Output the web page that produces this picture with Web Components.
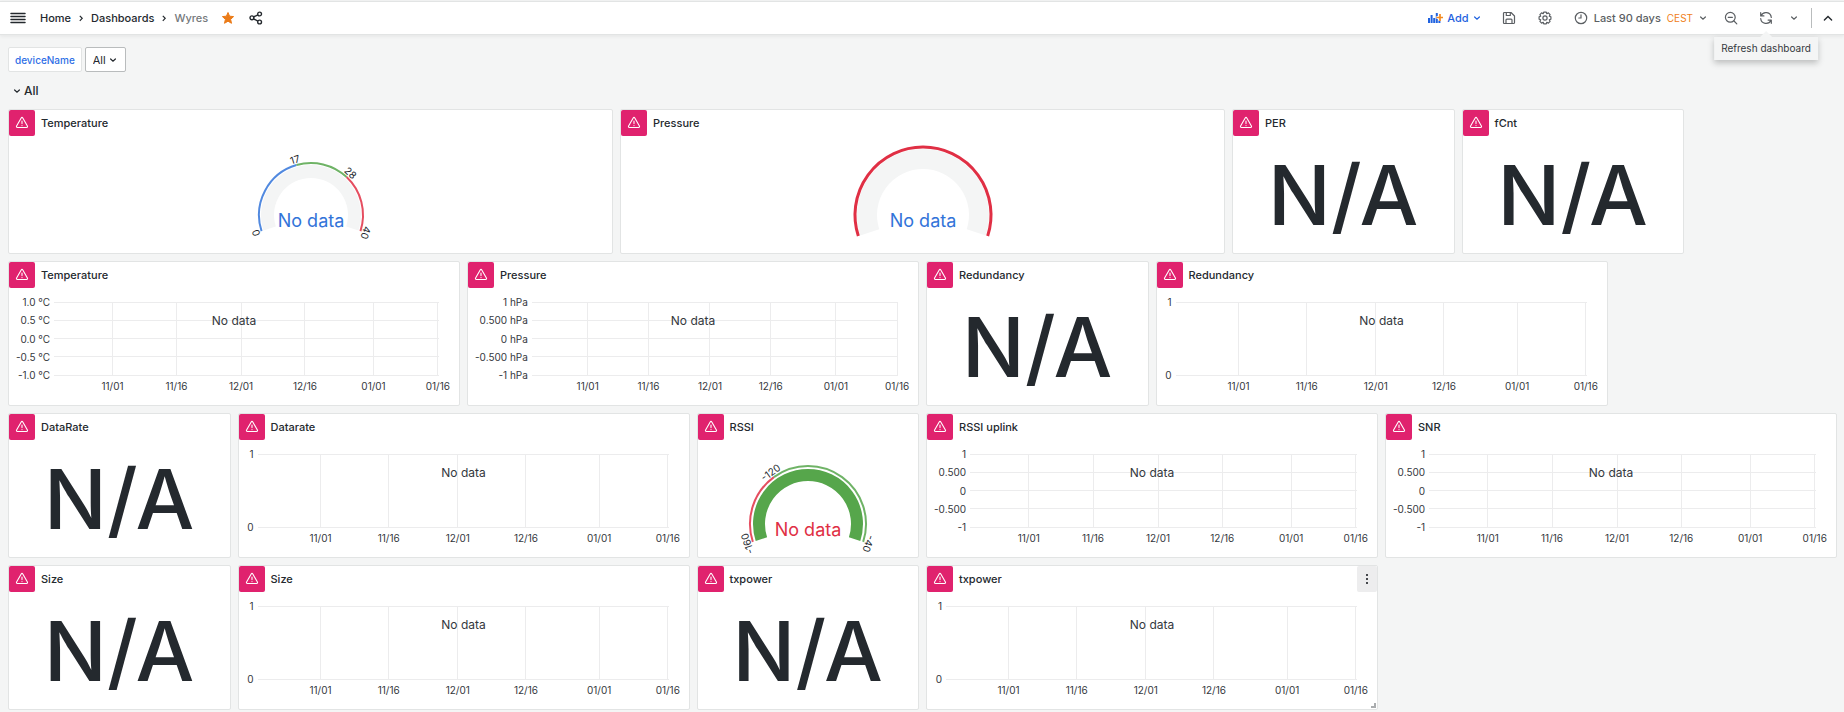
<!DOCTYPE html>
<html lang="en">
<head>
<meta charset="utf-8">
<title>Wyres - Dashboards</title>
<style>
  :root {
    --text: #24292e;
    --muted: #5b5f63;
    --canvas: #f4f5f5;
    --line: #e2e4e4;
    --blue: #1f62e0;
    --orange: #eb7b18;
    --error: #e0226e;
  }
  body { margin: 0; background: var(--canvas); color: var(--text); font: 11px/16px Inter, "Liberation Sans", sans-serif; }
</style>
</head>
<body>
<wyres-app></wyres-app>

<script>
const ICONS = {
  bars: [16, 12, '<g stroke="currentColor" stroke-width="1.5" stroke-linecap="round"><path d="M1 1.5h14M1 4.5h14M1 7.5h14M1 10.5h14"/></g>'],
  star: [14, 14, '<path fill="#eb7b18" stroke="#eb7b18" stroke-width="1" stroke-linejoin="round" d="M7 1.5l1.6 3.7 4 .4-3 2.7.9 4L7 10.2l-3.5 2.1.9-4-3-2.7 4-.4z"/>'],
  share: [14, 14, '<g fill="none" stroke="currentColor" stroke-width="1.4"><circle cx="10.6" cy="3" r="1.9"/><circle cx="2.9" cy="6.8" r="1.9"/><circle cx="10.6" cy="11" r="1.9"/><path d="M4.6 6l4.3-2.1M4.6 7.8l4.3 2.3"/></g>'],
  right: [6, 8, '<path fill="none" stroke="currentColor" stroke-width="1.2" d="M1.8 1.8L4.2 4.3 1.8 6.8"/>'],
  down: [8, 8, '<path fill="none" stroke="currentColor" stroke-width="1.2" stroke-linecap="round" d="M1.6 3L4 5.2 6.400 3"/>'],
  up: [10, 8, '<path fill="none" stroke="currentColor" stroke-width="1.4" stroke-linecap="round" d="M1.4 6L5 2.4 8.600 6"/>'],
  add: [15, 12, '<path fill="#1f62e0" d="M0 6h2v5H0zM2.600 3h2v8h-2zM5.200 6h2v5h-2zM7.800 1h2v10h-2zM10.400 8h2v3h-2z"/><path stroke="#fff" stroke-width="3.200" d="M12 2v7M8.500 5.500h7"/><path stroke="#f58a1f" stroke-width="1.700" d="M12 2v7M8.500 5.500H15"/>'],
  save: [14, 14, '<g fill="none" stroke="currentColor" stroke-width="1.200" stroke-linejoin="round"><path d="M1.500 2.600q0-1.100 1.100-1.100H9l3.500 3.500v6.400q0 1.100-1.100 1.100H2.600q-1.100 0-1.100-1.100z"/><path d="M4.300 1.500v3h4v-3M4 12.500V9q0-.9.900-.9h4.200q.9 0 .9.900v3.500"/></g>'],
  cog: [14, 14, '<g fill="none" stroke="currentColor" stroke-width="1.200" stroke-linejoin="round"><circle cx="7" cy="7" r="2.100"/><path d="M5.700 1.100h2.600l.5 1.600 1.600-.8 1.700 1.700-.8 1.600 1.600.5v2.600l-1.600.5.8 1.600-1.700 1.700-1.600-.8-.5 1.600H5.700l-.5-1.600-1.600.8-1.700-1.700.8-1.600-1.600-.5V5.700l1.600-.5-.8-1.600 1.700-1.700 1.600.8z"/></g>'],
  clock: [14, 14, '<g fill="none" stroke="currentColor" stroke-width="1.200" stroke-linecap="round"><circle cx="7" cy="7" r="5.700"/><path d="M7 3.800V7H4.800"/></g>'],
  zoomout: [14, 14, '<g fill="none" stroke="currentColor" stroke-width="1.200" stroke-linecap="round"><circle cx="6.300" cy="6.300" r="4.900"/><path d="M4.200 6.300h4.200M10 10l2.800 2.800"/></g>'],
  refresh: [14, 14, '<g fill="none" stroke="currentColor" stroke-width="1.200" stroke-linecap="round" stroke-linejoin="round"><path d="M2 4.800A5.400 5.400 0 0 1 12.300 6.500M1.700 1.700v3.200h3.200M12 9.200A5.400 5.400 0 0 1 1.700 7.500M12.300 12.300V9.100H9.100"/></g>'],
  warning: [14, 14, '<g fill="none" stroke="currentColor" stroke-width="1.100" stroke-linecap="round" stroke-linejoin="round"><path d="M6.200 2q.8-1.200 1.600 0l4.600 8q.6 1.400-.9 1.500h-9Q1 11.400 1.600 10z"/><path d="M7 5v2.600M7 9.500v.1"/></g>'],
  dots: [4, 12, '<g fill="currentColor"><path d="M1 1h2v2H1zM1 5h2v2H1zM1 9h2v2H1z"/></g>'],
  grip: [5, 5, '<path fill="none" stroke="#a9acae" stroke-width="2" d="M4 0v4H0"/>']
};

class Base extends HTMLElement {
  mount(html) {
    if (!this.shadowRoot) this.attachShadow({ mode: 'open' });
    this.shadowRoot.innerHTML = html;
  }
  connectedCallback() { this.mount(this.render()); }
}

customElements.define('wyres-icon', class extends Base {
  render() {
    const [w, h, body] = ICONS[this.getAttribute('name')];
    return `<style>:host{display:inline-flex;flex:none}svg{display:block}</style>
      <svg width="${w}" height="${h}" viewBox="0 0 ${w} ${h}" aria-hidden="true">${body}</svg>`;
  }
});

const CONTROL = `
  button { display: flex; align-items: center; justify-content: center; height: 28px; margin: 0; padding: 0 8px;
    border: 0; background: none; color: inherit; font: inherit; font-weight: 500; cursor: pointer; }
`;

customElements.define('wyres-breadcrumbs', class extends Base {
  render() {
    return `<style>${CONTROL}
      :host { display: flex; align-items: center; font-weight: 500; padding-left: 2px; }
      nav { display: flex; align-items: center; gap: 6px; margin: 0 5px; }
      a { color: inherit; text-decoration: none; padding: 0 1px; }
      .here { color: #75797c; }
      .mark { padding: 0 7px; }
    </style>
    <button aria-label="Open menu"><wyres-icon name="bars"></wyres-icon></button>
    <nav aria-label="Breadcrumbs">
      <a href="#home">Home</a><wyres-icon name="right"></wyres-icon>
      <a href="#dashboards">Dashboards</a><wyres-icon name="right"></wyres-icon>
      <a class="here" href="#wyres">Wyres</a>
    </nav>
    <button class="mark" aria-label="Unmark as favorite"><wyres-icon name="star"></wyres-icon></button>
    <button class="mark" aria-label="Share dashboard"><wyres-icon name="share"></wyres-icon></button>`;
  }
});

customElements.define('wyres-tooltip', class extends Base {
  render() {
    return `<style>
      :host { display: block; position: absolute; top: 100%; left: 50%; transform: translateX(-50%); margin-top: 5px; z-index: 2;
        padding: 4px 7px; background: var(--canvas); box-shadow: 0 3px 6px rgba(24,26,27,.25); white-space: nowrap;
        font-size: 10px; line-height: 15px; color: #34383d; }
      :host::before { content: ""; position: absolute; left: 50%; bottom: 100%; margin-left: -6px; border: 6px solid transparent; border-top-width: 0; border-bottom-color: var(--canvas); }
    </style><slot></slot>`;
  }
});

customElements.define('wyres-toolbar', class extends Base {
  render() {
    return `<style>${CONTROL}
      :host { display: flex; align-items: center; color: var(--muted); }
      .icon { padding: 0 7px; margin-left: 8px; }
      .add { color: var(--blue); gap: 4px; padding: 0 6px; }
      .time { gap: 6px; padding: 0 7px; margin-left: 8px; }
      .zone { color: #f08020; font-size: 10px; font-weight: 400; }
      .zoom { padding: 0 7px; margin-left: 3px; }
      .group { display: flex; position: relative; margin-left: 6px; }
      .range { margin-right: 4px; padding: 0 9px; }
      .kiosk { border-left: 1px solid #b9bcbd; height: 20px; width: 33px; color: var(--text); }
    </style>
    <button class="add"><wyres-icon name="add"></wyres-icon>Add<wyres-icon name="down"></wyres-icon></button>
    <button class="icon" aria-label="Save dashboard"><wyres-icon name="save"></wyres-icon></button>
    <button class="icon" aria-label="Dashboard settings"><wyres-icon name="cog"></wyres-icon></button>
    <button class="time"><wyres-icon name="clock"></wyres-icon><span>Last 90 days</span><span class="zone">CEST</span><wyres-icon name="down"></wyres-icon></button>
    <button class="zoom" aria-label="Zoom out time range"><wyres-icon name="zoomout"></wyres-icon></button>
    <div class="group"><button aria-label="Refresh dashboard"><wyres-icon name="refresh"></wyres-icon></button><wyres-tooltip role="tooltip">Refresh dashboard</wyres-tooltip></div>
    <button class="range" aria-label="Auto refresh interval"><wyres-icon name="down"></wyres-icon></button>
    <button class="kiosk" aria-label="Hide toolbar"><wyres-icon name="up"></wyres-icon></button>`;
  }
});

customElements.define('wyres-variable', class extends Base {
  render() {
    return `<style>
      :host { display: flex; gap: 3px; height: 25px; }
      label { display: flex; align-items: center; box-sizing: border-box; padding: 0 6px; background: #fff; border: 1px solid var(--line); border-radius: 2px;
        color: #2f6fe6; font-size: 10px; font-weight: 500; }
      .field { display: grid; align-items: center; }
      select { grid-area: 1/1; box-sizing: border-box; height: 25px; width: 41px; padding: 0 0 0 7px; margin: 0; appearance: none; background: #fff;
        border: 1px solid #b9bcbd; border-radius: 2px; color: var(--text); font: inherit; }
      wyres-icon { grid-area: 1/1; justify-self: end; margin-right: 9px; pointer-events: none; }
    </style>
    <label for="v">${this.getAttribute('label')}</label>
    <span class="field"><select id="v"><option>All</option></select><wyres-icon name="down"></wyres-icon></span>`;
  }
});

customElements.define('wyres-panel', class extends Base {
  render() {
    return `<style>
      :host { display: flex; flex-direction: column; box-sizing: border-box; min-width: 0; position: relative;
        background: #fff; border: 1px solid var(--line); border-radius: 2px;
        grid-column: ${this.getAttribute('col')} / span ${this.getAttribute('span')}; }
      header { display: flex; align-items: center; height: 26px; flex: none; }
      .err { width: 26px; height: 26px; padding: 0; border: 0; border-radius: 2px; background: var(--error); color: #fff; display: grid; place-items: center; }
      h2 { margin: 0 auto 0 6px; font-size: 11px; line-height: 16px; font-weight: 500; }
      .menu { width: 20px; height: 26px; padding: 0; border: 0; border-radius: 2px; background: #ededee; display: grid; place-items: center; color: #46494d; }
      .body { flex: 1; min-height: 0; display: grid; }
      .grip { position: absolute; right: 1px; bottom: 1px; }
    </style>
    <header>
      <button class="err" aria-label="Panel error"><wyres-icon name="warning"></wyres-icon></button>
      <h2>${this.getAttribute('name')}</h2>
      ${this.hasAttribute('active') ? '<button class="menu" aria-label="Panel menu"><wyres-icon name="dots"></wyres-icon></button>' : ''}
    </header>
    <div class="body"><slot></slot></div>
    ${this.hasAttribute('active') ? '<wyres-icon class="grip" name="grip"></wyres-icon>' : ''}`;
  }
});

customElements.define('wyres-stat', class extends Base {
  render() {
    return `<style>:host{display:grid;place-items:center;font-size:83px;line-height:100px;font-weight:500}</style><span><slot></slot></span>`;
  }
});

const TICKS = [['11/01', 15.2], ['11/16', 31.8], ['12/01', 48.6], ['12/16', 65.2], ['01/01', 83], ['01/16', 99.7]];

customElements.define('wyres-chart', class extends Base {
  render() {
    const labels = this.getAttribute('y').split('|');
    const rows = labels.map((_, i) => i * 100 / (labels.length - 1));
    return `<style>
      :host { display: grid; grid-template: 73px 1fr / auto 1fr; column-gap: 4px; padding: 14px 20px 0 0; font-size: 10px; line-height: 12px; color: #34383d; }
      .y { display: flex; flex-direction: column; justify-content: space-between; text-align: right; margin: -6px 0;
        padding-left: 7px; min-width: 8px; grid-area: 1/1; white-space: nowrap; }
      svg { grid-area: 1/2; width: 100%; height: 73px; overflow: visible; }
      line { stroke: #ececed; shape-rendering: crispEdges; }
      text { fill: #34383d; font-size: 10px; text-anchor: middle; }
      p { grid-area: 1/1/2/3; justify-self: center; margin: 12px -20px 0 0; font-size: 12px; line-height: 14px; color: #34383d; position: relative; }
    </style>
    <div class="y">${labels.map(l => `<span>${l}</span>`).join('')}</div>
    <svg role="img" aria-label="Time series">
      ${rows.map(r => `<line x1="0" x2="100%" y1="${r}%" y2="${r}%"/>`).join('')}
      ${TICKS.map(([t, x]) => `<line x1="${x}%" x2="${x}%" y1="0" y2="100%"/><text x="${x}%" y="88">${t}</text>`).join('')}
    </svg>
    <p>No data</p>`;
  }
});

const TONES = { blue: '#3274d9', green: '#56a64b', red: '#e02f44' };

customElements.define('wyres-gauge', class extends Base {
  point(r, deg) {
    const a = deg * Math.PI / 180;
    return `${(r * Math.cos(a)).toFixed(2)} ${(-r * Math.sin(a)).toFixed(2)}`;
  }
  arc(r, width, from, to, colour, opacity = 1) {
    const a = 198 - from * 216, b = 198 - to * 216;
    return `<path fill="none" stroke="${colour}" stroke-opacity="${opacity}" stroke-width="${width}" d="M${this.point(r, a)}A${r} ${r} 0 ${a - b > 180 ? 1 : 0} 1 ${this.point(r, b)}"/>`;
  }
  render() {
    const get = n => this.getAttribute(n);
    const [edge, edgeWidth, outer, inner] = get('rings').split(' ').map(Number);
    // zones: "from to tone" in fractions of the sweep; marks: "text fraction"
    const zones = get('zones').split('|').map(z => z.split(' '));
    const marks = (get('marks') || '').split('|').filter(Boolean).map(m => m.split(' '));
    const markRadius = edge + 6;
    return `<style>
      :host { display: grid; justify-items: center; overflow: hidden; }
      svg { width: 200px; height: 117px; }
      text { text-anchor: middle; }
      .value { font-size: 18px; }
      .mark { font-size: 10px; fill: #24292e; }
    </style>
    <svg viewBox="-100 -${get('cy')} 200 117" role="img" aria-label="Gauge">
      ${this.arc((outer + inner) / 2, outer - inner, 0, 1, TONES[get('fill')] || '#f4f5f5')}
      ${zones.map(([f, t, c]) => this.arc(edge, edgeWidth, +f, +t, TONES[c], edgeWidth > 2 ? 1 : .85)).join('')}
      ${marks.map(([t, f]) => { const d = 198 - f * 216;
        return `<text class="mark" transform="translate(${this.point(markRadius, d).replace(' ', ',')}) rotate(${90 - d})" y="4">${t}</text>`; }).join('')}
      <text class="value" y="12" fill="${TONES[get('tone')]}">No data</text>
    </svg>`;
  }
});

customElements.define('wyres-app', class extends Base {
  render() {
    const five = '1|0.500|0|-0.500|-1';
    return `<style>${CONTROL}
      :host { display: block; }
      .bar { display: flex; align-items: center; justify-content: space-between; height: 32px; margin-top: 1px; background: #fff;
        border-top: 1px solid var(--line); border-bottom: 1px solid var(--line); box-shadow: 0 1px 4px rgba(24,26,27,.08); }
      main { padding: 12px 7px 0 8px; }
      .row { height: 20px; margin: 9px 0 8px; padding: 0 0 0 5px; gap: 3px; font-size: 12px; }
      .grid { display: grid; grid-template-columns: repeat(24, minmax(0, 1fr)); grid-auto-rows: 145px; gap: 7px; }
    </style>
    <header class="bar"><wyres-breadcrumbs></wyres-breadcrumbs><wyres-toolbar></wyres-toolbar></header>
    <main>
      <wyres-variable label="deviceName"></wyres-variable>
      <button class="row" aria-expanded="true"><wyres-icon name="down"></wyres-icon>All</button>
      <section class="grid">
        <wyres-panel name="Temperature" col="1" span="8"><wyres-gauge cy="79" rings="52 2 50 37" zones="0 .425 blue|.425 .7 green|.7 1 red" marks="0 0|17 .425|28 .7|40 1" tone="blue"></wyres-gauge></wyres-panel>
        <wyres-panel name="Pressure" col="9" span="8"><wyres-gauge cy="79" rings="68 3 66 46" zones="0 1 red" tone="blue"></wyres-gauge></wyres-panel>
        <wyres-panel name="PER" col="17" span="3"><wyres-stat>N/A</wyres-stat></wyres-panel>
        <wyres-panel name="fCnt" col="20" span="3"><wyres-stat>N/A</wyres-stat></wyres-panel>

        <wyres-panel name="Temperature" col="1" span="6"><wyres-chart y="1.0 °C|0.5 °C|0.0 °C|-0.5 °C|-1.0 °C"></wyres-chart></wyres-panel>
        <wyres-panel name="Pressure" col="7" span="6"><wyres-chart y="1 hPa|0.500 hPa|0 hPa|-0.500 hPa|-1 hPa"></wyres-chart></wyres-panel>
        <wyres-panel name="Redundancy" col="13" span="3"><wyres-stat>N/A</wyres-stat></wyres-panel>
        <wyres-panel name="Redundancy" col="16" span="6"><wyres-chart y="1|0"></wyres-chart></wyres-panel>

        <wyres-panel name="DataRate" col="1" span="3"><wyres-stat>N/A</wyres-stat></wyres-panel>
        <wyres-panel name="Datarate" col="4" span="6"><wyres-chart y="1|0"></wyres-chart></wyres-panel>
        <wyres-panel name="RSSI" col="10" span="3"><wyres-gauge cy="84" rings="58 2 55 43" fill="green" zones="0 .3333 red|.3333 1 green" marks="-160 0|-120 .3333|-40 1" tone="red"></wyres-gauge></wyres-panel>
        <wyres-panel name="RSSI uplink" col="13" span="6"><wyres-chart y="${five}"></wyres-chart></wyres-panel>
        <wyres-panel name="SNR" col="19" span="6"><wyres-chart y="${five}"></wyres-chart></wyres-panel>

        <wyres-panel name="Size" col="1" span="3"><wyres-stat>N/A</wyres-stat></wyres-panel>
        <wyres-panel name="Size" col="4" span="6"><wyres-chart y="1|0"></wyres-chart></wyres-panel>
        <wyres-panel name="txpower" col="10" span="3"><wyres-stat>N/A</wyres-stat></wyres-panel>
        <wyres-panel name="txpower" col="13" span="6" active><wyres-chart y="1|0"></wyres-chart></wyres-panel>
      </section>
    </main>`;
  }
});
</script>
</body>
</html>
